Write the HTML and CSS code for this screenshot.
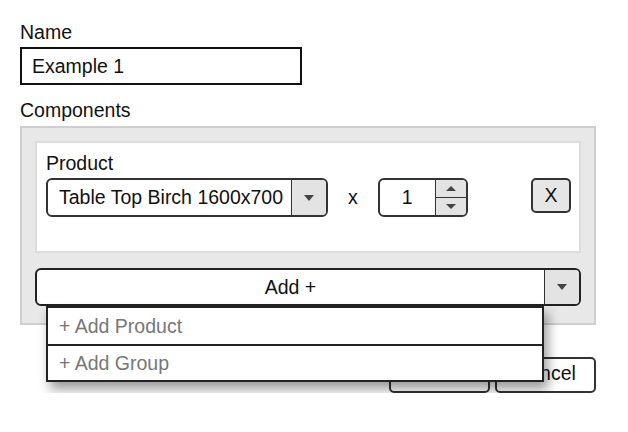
FILE: index.html
```html
<!DOCTYPE html>
<html>
<head>
<meta charset="utf-8">
<link rel="stylesheet" href="styles.css">
</head>
<body>
<div class="form">
  <div class="label">Name</div>
  <div class="text-input">Example 1</div>

  <div class="label components-label">Components</div>
  <div class="components">
    <div class="card">
      <div class="label">Product</div>
      <div class="row">
        <div class="select">
          <span class="select-value">Table Top Birch 1600x700</span>
          <span class="select-arrow"><span class="tri-down"></span></span>
        </div>
        <span class="times">x</span>
        <div class="number">
          <span class="number-value">1</span>
          <span class="spinner">
            <span class="spin-btn"><span class="tri-up small"></span></span>
            <span class="spin-btn"><span class="tri-down small"></span></span>
          </span>
        </div>
        <div class="remove">X</div>
      </div>
    </div>

    <div class="add-wrap">
      <div class="add-bar">
        <span class="add-main">Add +</span>
        <span class="add-arrow"><span class="tri-down"></span></span>
      </div>
      <div class="menu">
        <div class="menu-item">+ Add Product</div>
        <div class="menu-item">+ Add Group</div>
      </div>
    </div>
  </div>

  <div class="actions">
    <div class="btn btn-save"><span class="btn-label">Save</span></div>
    <div class="btn">Cancel</div>
  </div>
</div>
</body>
</html>
```

FILE: styles.css
```css
* { box-sizing: border-box; }
html, body { margin: 0; background: #fff; }
body {
  font-family: "Liberation Sans", Arial, sans-serif;
  font-size: 19.5px;
  color: #111;
}
.form {
  padding: 21px 32px 0 20px;
}
.label {
  line-height: 22px;
  margin-bottom: 4px;
}
.text-input {
  width: 282px;
  height: 38px;
  border: 2px solid #111;
  padding: 0 10px;
  display: flex;
  align-items: center;
}
.components-label {
  margin-top: 14px;
  margin-bottom: 5px;
}
.components {
  background: #e8e8e8;
  border: 2px solid #cfcfcf;
  padding: 13px 13px 17px 13px;
}
.card {
  background: #fff;
  border: 2px solid #dcdcdc;
  padding: 9px 8px 34px 9px;
  height: 112px;
}
.row {
  display: flex;
  align-items: flex-start;
}
.select {
  width: 282px;
  height: 39px;
  border: 2px solid #333;
  border-radius: 6px;
  display: flex;
  overflow: hidden;
}
.select-value {
  flex: 1;
  padding-left: 11px;
  display: flex;
  align-items: center;
  white-space: nowrap;
}
.select-arrow, .add-arrow {
  width: 35px;
  flex: none;
  background: #e3e3e3;
  border-left: 1.5px solid #333;
  display: flex;
  align-items: center;
  justify-content: center;
}
.tri-down {
  width: 0; height: 0;
  border-left: 5px solid transparent;
  border-right: 5px solid transparent;
  border-top: 6px solid #444;
}
.tri-up {
  width: 0; height: 0;
  border-left: 5px solid transparent;
  border-right: 5px solid transparent;
  border-bottom: 6px solid #444;
}
.tri-up.small { border-bottom-width: 5px; }
.tri-down.small { border-top-width: 5px; }
.times {
  margin-left: 20px;
  margin-right: 20px;
  line-height: 39px;
}
.number {
  width: 90px;
  height: 39px;
  border: 2px solid #333;
  border-radius: 6px;
  display: flex;
  overflow: hidden;
}
.number-value {
  flex: 1;
  display: flex;
  align-items: center;
  justify-content: center;
}
.spinner {
  width: 31px;
  background: #e3e3e3;
  border-left: 1.5px solid #333;
  display: flex;
  flex-direction: column;
}
.spin-btn {
  flex: 1;
  display: flex;
  align-items: center;
  justify-content: center;
}
.spin-btn + .spin-btn { border-top: 1.5px solid #333; }
.remove {
  margin-left: auto;
  width: 40px;
  height: 35px;
  background: #e6e6e6;
  border: 2px solid #333;
  border-radius: 5px;
  display: flex;
  align-items: center;
  justify-content: center;
}
.add-wrap {
  position: relative;
  margin-top: 15px;
}
.add-bar {
  height: 38px;
  border: 2px solid #222;
  border-radius: 6px;
  background: #fff;
  display: flex;
  overflow: hidden;
}
.add-main {
  flex: 1;
  display: flex;
  align-items: center;
  justify-content: center;
}
.menu {
  position: absolute;
  left: 11px;
  top: 38px;
  width: 498px;
  background: #fff;
  border: 2px solid #222;
  box-shadow: 4px 7px 11px rgba(0,0,0,0.4);
  z-index: 2;
}
.menu-item {
  height: 36px;
  padding-left: 11px;
  display: flex;
  align-items: center;
  color: #777;
}
.menu-item + .menu-item { border-top: 2px solid #222; }
.actions {
  display: flex;
  justify-content: flex-end;
  gap: 5px;
  margin-top: 32px;
}
.btn {
  width: 101px;
  height: 36px;
  border: 2px solid #333;
  border-radius: 5px;
  background: #fff;
  display: flex;
  align-items: center;
  justify-content: center;
  padding-bottom: 3px;
}
.btn-save .btn-label {
  visibility: hidden;
}
```
